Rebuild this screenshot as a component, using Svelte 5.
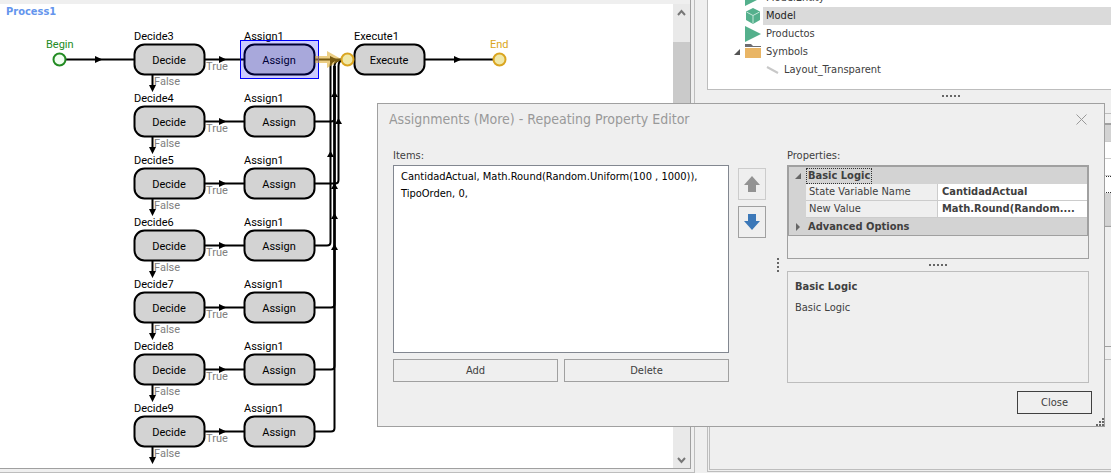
<script>
  const rows = [3, 4, 5, 6, 7, 8, 9].map((n, i) => ({ name: `Decide${n}`, y: i * 62 }));
  const joins = [
    'M315 121.5H331Q334.5 121.5 334.5 118V66Q334.5 60 342 60',
    'M315 183.5H335Q338.5 183.5 338.5 180V66Q338.5 60 344 60',
    'M315 245.5H327Q330.5 245.5 330.5 242V66Q330.5 60 338 60',
    'M315 307.5H331Q334.5 307.5 334.5 304V66',
    'M315 369.5H331Q334.5 369.5 334.5 366V66',
    'M315 431.5H331Q334.5 431.5 334.5 428V66'
  ];
  const ups = [[334.5, 91], [338.5, 118], [330.5, 151], [334.5, 183], [334.5, 213], [334.5, 244]];
  const items = ['CantidadActual, Math.Round(Random.Uniform(100 , 1000)),', 'TipoOrden, 0,'];
  const tree = [
    { label: 'ModelEntity', icon: 'entity' },
    { label: 'Model', icon: 'model', selected: true },
    { label: 'Productos', icon: 'entity' },
    { label: 'Symbols', icon: 'folder' },
    { label: 'Layout_Transparent', icon: 'line', child: true }
  ];
</script>

<div class="app">
  <main class="process">
    <div class="frame">
      <div class="canvas">
        <h1>Process1</h1>
        <svg class="flow" width="560" height="464" viewBox="0 4 560 464">
          <g class="wire">
            <path d="M66 59.5H134M425 59.5H494" />
            {#each joins as d}<path {d} />{/each}
          </g>
          <path d="M95 56L102.500 59.500L95 63ZM454 56L461.500 59.500L454 63Z" />
          {#each ups as [x, y]}<path d="M{x} {y}l3.500 6h-7z" />{/each}

          {#each rows as row}
            <g transform="translate(0 {row.y})">
              <path class="wire" d="M205 59.5H244M152.500 75V86" />
              <path d="M219 56L226.500 59.500L219 63ZM149 85H156L152.500 92Z" />
              <rect class="node" x="134.500" y="44.500" width="70" height="30" rx="10" />
              <rect class="node" x="244.500" y="44.500" width="70" height="30" rx="10" />
              <text x="134" y="40">{row.name}</text>
              <text x="244" y="40">Assign1</text>
              <text class="mid" x="169" y="64">Decide</text>
              <text class="mid" x="279" y="64">Assign</text>
              <text class="dim" x="206" y="70">True</text>
              <text class="dim" x="154" y="85">False</text>
            </g>
          {/each}

          <path class="wire" d="M315 59.5H345" />
          <path d="M330 56L337 59.500L330 63Z" />
          <rect class="node" x="354.500" y="44.500" width="70" height="30" rx="10" />
          <text x="354" y="40">Execute1</text>
          <text class="mid" x="389" y="64">Execute</text>

          <rect class="pick" x="240.500" y="40.500" width="78" height="38" />
          <path class="glow" d="M315 56H327V51L342 59.500L327 68V63H315Z" />
          <circle class="end" cx="347.500" cy="59.500" r="6" />
          <circle class="end" cx="499.500" cy="59.500" r="6" />
          <circle class="begin" cx="59.500" cy="59.500" r="6" />
          <text class="green" x="46" y="48">Begin</text>
          <text class="gold" x="490" y="48">End</text>
        </svg>
      </div>
      <div class="scroll">
        <button aria-label="Scroll up"><svg width="9" height="8" viewBox="0 0 9 8"><path d="M1 6L4.500 2L8 6" /></svg></button>
        <div class="thumb"></div>
        <button aria-label="Scroll down"><svg width="9" height="8" viewBox="0 0 9 8"><path d="M1 2L4.500 6L8 2" /></svg></button>
      </div>
    </div>
  </main>

  <aside>
    <ul class="tree">
      {#each tree as node}
        <li class:child={node.child}>
          {#if node.icon === 'folder'}
            <svg class="twist" width="6" height="6"><path d="M6 0V6H0Z" /></svg>
          {/if}
          <svg class="icon" width="16" height="16" viewBox="0 0 16 16">
            {#if node.icon === 'entity'}
              <path fill="#54b08c" d="M0 0L16 8L0 16Z" />
            {:else if node.icon === 'model'}
              <path fill="#54b08c" d="M8 0L15 3.500V12L8 16L1 12V3.500Z" />
              <path fill="none" stroke="#c5e6d9" d="M1.500 4L8 7.500L14.500 4M8 7.500V15.500" />
            {:else if node.icon === 'folder'}
              <path fill="#6d6d72" d="M0 0H6L8 2H16V3H0Z" />
              <path fill="#e9b565" d="M0 4H16V14H0Z" />
            {:else}
              <path fill="none" stroke="#c8c8c8" stroke-width="2" d="M4 5L15 11" />
            {/if}
          </svg>
          <span class:selected={node.selected}>{node.label}</span>
        </li>
      {/each}
    </ul>
    <div class="dots"></div>
    <div class="under">
      <div class="strip"><i class="head"></i><i></i><i></i><i class="focus"></i><i class="grey"></i></div>
      <div class="gap"></div>
      <div class="note"></div>
    </div>
  </aside>

  <div class="dialog" role="dialog" aria-labelledby="dialog-title">
    <header>
      <h2 id="dialog-title">Assignments (More) - Repeating Property Editor</h2>
      <button class="x" aria-label="Dismiss"><svg width="11" height="11"><path d="M.5 .5L10.500 10.500M10.500 .5L.5 10.500" /></svg></button>
    </header>
    <div class="body">
      <section class="items">
        <h3>Items:</h3>
        <ul class="list">
          {#each items as item}<li>{item}</li>{/each}
        </ul>
        <div class="pair">
          <button class="btn">Add</button>
          <button class="btn">Delete</button>
        </div>
      </section>
      <div class="move">
        <button disabled aria-label="Move up"><svg width="16" height="16"><path fill="#939393" d="M8 0L16 9H12V16H4V9H0Z" /></svg></button>
        <button aria-label="Move down"><svg width="16" height="16"><path fill="#3c78b8" d="M8 16L0 7H4V0H12V7H16Z" /></svg></button>
      </div>
      <div class="vdots"></div>
      <section class="props">
        <h3>Properties:</h3>
        <div class="grid">
          <table>
            <colgroup><col class="c1" /><col class="c2" /><col /></colgroup>
            <tbody>
              <tr class="cat"><td class="gut"><svg width="6" height="6"><path d="M6 0V6H0Z" /></svg></td><th colspan="2"><span class="focused">Basic Logic</span></th></tr>
              <tr><td class="gut"></td><td class="name">State Variable Name</td><td class="val">CantidadActual</td></tr>
              <tr><td class="gut"></td><td class="name">New Value</td><td class="val">Math.Round(Random....</td></tr>
              <tr class="cat"><td class="gut"><svg width="6" height="8"><path d="M1 0L5 4L1 8Z" /></svg></td><th colspan="2"><span>Advanced Options</span></th></tr>
            </tbody>
          </table>
        </div>
        <div class="dots"></div>
        <div class="help">
          <h4>Basic Logic</h4>
          <p>Basic Logic</p>
        </div>
      </section>
    </div>
    <footer><button class="btn close">Close</button></footer>
    <svg class="grip" width="8" height="8"><path d="M6 0h2v2h-2zM3 3h2v2h-2zM6 3h2v2h-2zM0 6h2v2h-2zM3 6h2v2h-2zM6 6h2v2h-2z" /></svg>
  </div>
</div>

<style>
  :global(body) { margin: 0; background: #efefef; }
  * { box-sizing: border-box; }
  h1, h2, h3, h4, p, ul { margin: 0; padding: 0; font-weight: normal; list-style: none; }
  button { font: inherit; color: inherit; background: none; border: 0; padding: 0; }
  svg { display: block; flex: none; }
  .app {
    position: relative; min-height: 100vh; overflow: hidden;
    display: grid; grid-template-columns: minmax(0, 695fr) 12px minmax(0, 404fr);
    font: 11px/17px "DejaVu Sans Condensed", "DejaVu Sans", sans-serif; color: #404040;
  }
  .process { display: flex; border: solid #bdbdbd; border-width: 0 1px 1px 0; padding: 0 3px 3px 0; }
  .frame { flex: 1; display: flex; min-width: 0; border: solid #a0a0a0; border-width: 0 1px 1px 0; padding-top: 4px; }
  .canvas { flex: 1; min-width: 0; background: #fff; overflow: hidden; display: grid; }
  .canvas > * { grid-area: 1 / 1; }
  h1 { font-size: 11px; line-height: 16px; font-weight: bold; color: #6495ed; padding-left: 6px; }
  .flow { font: 11px Roboto, sans-serif; }
  .wire { fill: none; stroke: #000; stroke-width: 2; }
  .node { fill: #d3d3d3; stroke: #000; stroke-width: 2; }
  .mid { text-anchor: middle; }
  .dim { fill: #808080; }
  .green { fill: #228b22; }
  .gold { fill: #daa520; }
  .pick { fill: #0000ff33; stroke: #00f; }
  .glow { fill: #daa520; opacity: .55; }
  .end { fill: #f0e8a8; stroke: #daa520; stroke-width: 2; }
  .begin { fill: #f0fff0; stroke: #228b22; stroke-width: 2; }
  .scroll { width: 17px; background: #e9e9e9; display: flex; flex-direction: column; }
  .scroll button { height: 17px; display: grid; place-items: center; }
  .scroll path { fill: none; stroke: #777; stroke-width: 2; }
  .thumb { height: 75%; margin: 21px 0 auto; background: #cacaca; }

  aside { grid-column: 3; display: flex; flex-direction: column; min-width: 0; }
  .tree { height: 90px; background: #fff; border: solid #bdbdbd; border-width: 0 0 1px 1px; display: flex; flex-direction: column; justify-content: flex-end; padding-bottom: 10px; overflow: hidden; }
  .tree li { display: flex; align-items: center; height: 18px; flex: none; padding-left: 37px; line-height: 18px; }
  .tree li.child { padding-left: 55px; }
  .tree span { flex: 1; padding-left: 3px; margin-left: 2px; }
  .tree .selected { background: #dadada; color: #222; }
  .twist { margin: 0 5px 0 -11px; fill: #555; }
  .dots { width: 18px; height: 2px; margin: 5px auto; background: repeating-linear-gradient(90deg, #666 0 2px, transparent 2px 4px); }
  aside .dots { margin: 5px 151px 0 auto; }
  .under { flex: 1; display: flex; flex-direction: column; margin: 16px 0 1px; border: solid #bdbdbd; border-width: 1px 0 1px 1px; }
  .strip { margin-top: 9px; border: solid #a0a0a0; border-width: 2px 0 1px; height: 104px; display: flex; flex-direction: column; }
  .strip i { height: 17px; background: #fff; border-bottom: 1px solid #ccc; }
  .strip .head { background: #d3d3d3; }
  .strip .focus { border: dotted #333; border-width: 1px 0; }
  .strip .grey { flex: 1; background: #d3d3d3; }
  .gap { height: 120px; border-bottom: 1px solid #a0a0a0; }
  .note { flex: 1; margin: 12px 0 1px 1px; border: solid #bdbdbd; border-width: 1px 0 1px 1px; }

  .dialog {
    position: absolute; left: 377px; right: 6px; top: 103px;
    background: #efefef; border: 1px solid #a0a0a0; padding: 0 15px 12px;
  }
  header { display: flex; justify-content: space-between; align-items: center; height: 30px; margin: 0 2px 0 -4px; }
  h2 { font-size: 14px; line-height: 30px; color: #999; }
  .x path { stroke: #999; fill: none; }
  .body { display: grid; grid-template-columns: minmax(0, 336fr) 28px 3px minmax(0, 302fr); column-gap: 9px; padding-top: 13px; }
  h3 { font-size: 11px; line-height: 18px; }
  .items { display: flex; flex-direction: column; }
  .list { height: 188px; background: #fff; border: 1px solid #828790; padding: 2px 7px; color: #000; }
  .pair { display: grid; grid-template-columns: 1fr 1fr; gap: 6px; margin-top: 6px; }
  .btn { height: 23px; border: 1px solid #a0a0a0; }
  .move { display: grid; gap: 6px; align-content: start; padding-top: 21px; }
  .move button { height: 32px; border: 1px solid #a0a0a0; display: grid; place-items: center; }
  .move button:disabled { border-color: #ccc; }
  .vdots { width: 2px; height: 14px; margin: 111px 0 0 2px; background: repeating-linear-gradient(#666 0 2px, transparent 2px 4px); }
  .grid { height: 94px; border: 1px solid #a0a0a0; }
  table { width: 100%; table-layout: fixed; border-collapse: separate; border-spacing: 0; border: 1px solid #a0a0a0; background: #d3d3d3; line-height: 16px; }
  td, th { height: 17px; padding: 0; text-align: left; font-weight: bold; white-space: nowrap; overflow: hidden; }
  .c1 { width: 17px; }
  .c2 { width: 132px; }
  .gut svg { margin: 0 auto; fill: #666; }
  .name { background: #efefef; border: solid #ccc; border-width: 0 1px 1px 0; padding-left: 3px; font-weight: normal; }
  .val { background: #fff; border-bottom: 1px solid #ccc; padding-left: 4px; }
  th span { display: inline-block; line-height: 14px; padding: 0 1px; margin-left: 1px; vertical-align: middle; }
  .focused { outline: 1px dotted #333; }
  .help { height: 112px; border: 1px solid #bdbdbd; padding: 6px 7px; }
  h4 { font-size: 11px; font-weight: bold; }
  .help p { margin-top: 4px; }
  footer { display: flex; justify-content: flex-end; margin: 8px -3px 0 0; }
  .close { width: 75px; border-color: #404040; }
  .grip { position: absolute; right: 0; bottom: 0; fill: #666; }
</style>
